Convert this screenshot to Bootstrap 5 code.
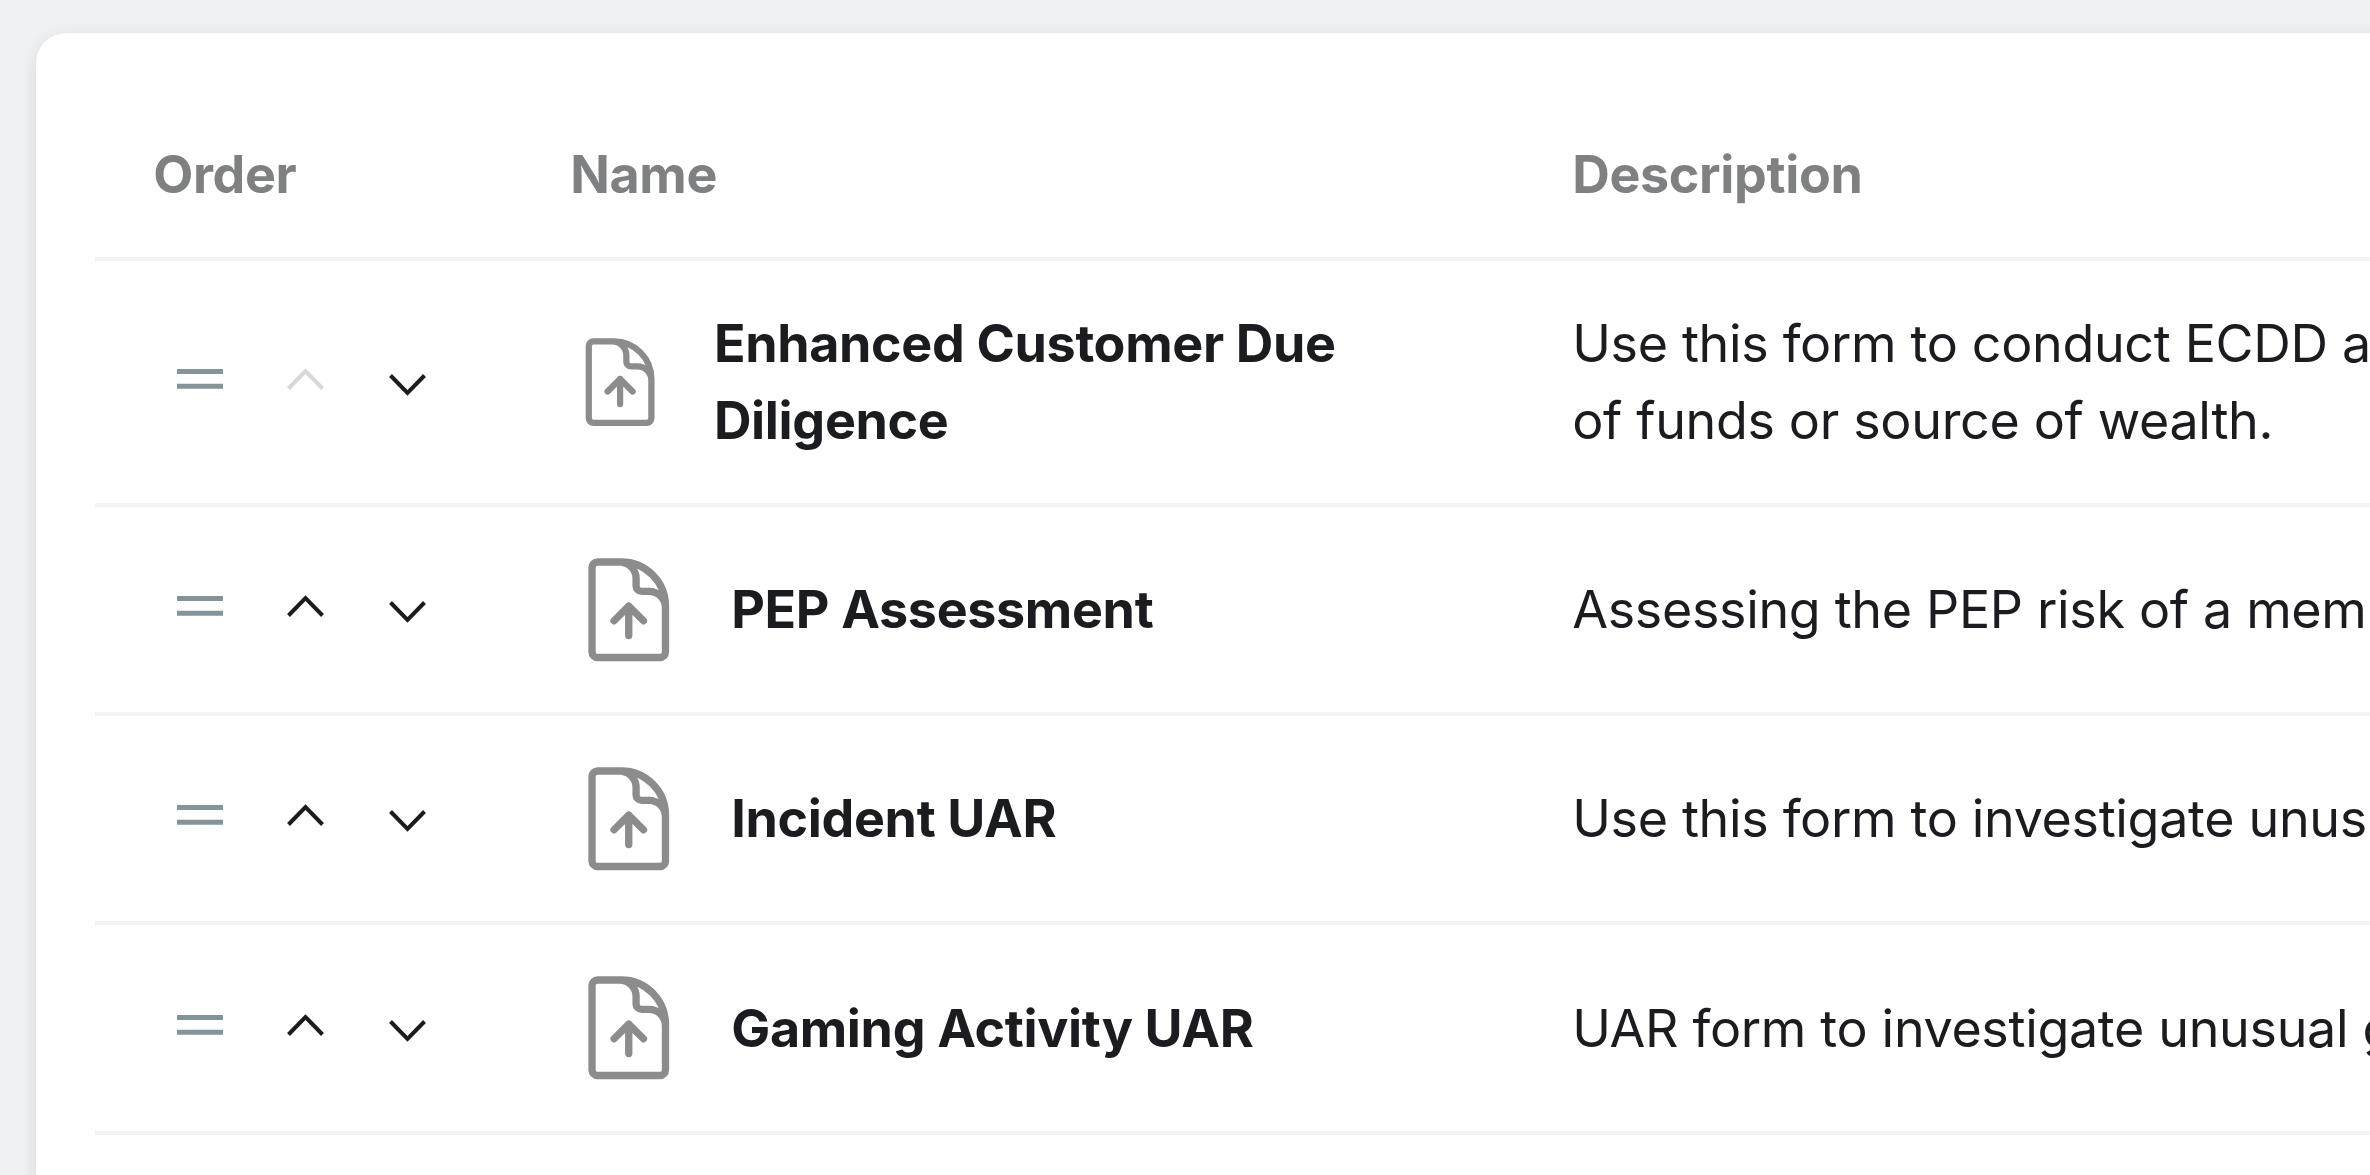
<!DOCTYPE html>
<html lang="en">
<head>
<meta charset="utf-8">
<meta name="viewport" content="width=device-width, initial-scale=1">
<title>Forms</title>
<link href="https://cdn.jsdelivr.net/npm/bootstrap@5.3.0/dist/css/bootstrap.min.css" rel="stylesheet">
<style>
  body { background: #eff0f2; font-family: Inter, "Liberation Sans", sans-serif; font-size: 52px; letter-spacing: -.0064em; line-height: 77px; color: #1b1c1f; height: 1175px; overflow: hidden; }
  .page-wrap { padding: 33px 0 0 36px; }
  .forms-card { width: 2700px; height: 1400px; border-radius: 30px; padding: 48px 58.5px; box-shadow: 0 4px 15px rgba(0,0,0,.1); }
  .forms-table { table-layout: fixed; width: 2580px; border-collapse: separate; border-spacing: 0; --bs-table-color: #1b1c1f; --bs-table-bg: transparent; }
  .forms-table > :not(caption) > * > * { padding: 43.5px 58.7px; border-bottom: 4px solid #f3f3f4; }
  .forms-table > thead > tr > th { height: 180px; padding-top: 54.5px; padding-bottom: 40px; color: #7f8081; font-weight: 700; vertical-align: top; }
  .c-order { width: 417px; }
  .c-name { width: 1002px; }
  .forms-table tbody tr { height: 209px; }
  .forms-table tbody tr:first-child { height: 246px; }
  .forms-table tbody tr:last-child { height: 210px; }
  .order-tools { margin: -7px 0 0 23.7px; }
  .order-tools svg { display: block; flex: none; }
  .doc-icon { flex: 0 0 auto; width: 117.5px; height: 117.5px; color: #8c8c8d; }
  .doc-icon.compact { width: 100.2px; height: 100.2px; }
  .name-row { gap: 43.5px; }
  .form-name { font-weight: 700; }
  .grip { margin-right: 64px; }
  .down { margin: 12px 0 0 65.5px; }
  .is-off { opacity: .17; }
</style>
</head>
<body>
<svg class="d-none" xmlns="http://www.w3.org/2000/svg">
  <symbol id="doc" viewBox="0 0 24 24"><path fill="none" stroke="currentColor" stroke-width="1.5" stroke-linecap="round" stroke-linejoin="round" d="M19.5 14.25v-2.625a3.375 3.375 0 0 0-3.375-3.375h-1.5A1.125 1.125 0 0 1 13.5 7.125v-1.5a3.375 3.375 0 0 0-3.375-3.375H8.25m6.75 12-3-3m0 0-3 3m3-3v6m-1.5-15H5.625c-.621 0-1.125.504-1.125 1.125v17.25c0 .621.504 1.125 1.125 1.125h12.75c.621 0 1.125-.504 1.125-1.125V11.25a9 9 0 0 0-9-9z"/></symbol>
  <symbol id="grip" viewBox="0 0 46 22"><path fill="none" stroke="#83949b" stroke-width="5" d="M0 3.5h46M0 18.2h46"/></symbol>
  <symbol id="up" viewBox="0 0 37 22"><path fill="none" stroke="currentColor" stroke-width="4" d="M1.5 20.5 18.5 3l17 17.5"/></symbol>
  <symbol id="down" viewBox="0 0 37 22"><path fill="none" stroke="currentColor" stroke-width="4" d="M1.5 1.5 18.5 19l17-17.5"/></symbol>
</svg>
<div class="page-wrap">
  <main class="forms-card bg-white">
    <table class="table forms-table mb-0 align-middle">
      <thead>
        <tr><th class="c-order">Order</th><th class="c-name">Name</th><th>Description</th></tr>
      </thead>
      <tbody>
        <tr>
          <td><div class="order-tools d-flex align-items-center"><svg class="grip" width="46" height="22"><use href="#grip"/></svg><svg class="is-off" width="37" height="22"><use href="#up"/></svg><svg class="down" width="37" height="22"><use href="#down"/></svg></div></td>
          <td><div class="name-row d-flex align-items-center"><svg class="doc-icon compact"><use href="#doc"/></svg><span class="form-name">Enhanced Customer Due<br>Diligence</span></div></td>
          <td class="text-nowrap">Use this form to conduct ECDD a<br>of funds or source of wealth.</td>
        </tr>
        <tr>
          <td><div class="order-tools d-flex align-items-center"><svg class="grip" width="46" height="22"><use href="#grip"/></svg><svg width="37" height="22"><use href="#up"/></svg><svg class="down" width="37" height="22"><use href="#down"/></svg></div></td>
          <td><div class="name-row d-flex align-items-center"><svg class="doc-icon"><use href="#doc"/></svg><span class="form-name">PEP Assessment</span></div></td>
          <td class="text-nowrap">Assessing the PEP risk of a mem</td>
        </tr>
        <tr>
          <td><div class="order-tools d-flex align-items-center"><svg class="grip" width="46" height="22"><use href="#grip"/></svg><svg width="37" height="22"><use href="#up"/></svg><svg class="down" width="37" height="22"><use href="#down"/></svg></div></td>
          <td><div class="name-row d-flex align-items-center"><svg class="doc-icon"><use href="#doc"/></svg><span class="form-name">Incident UAR</span></div></td>
          <td class="text-nowrap">Use this form to investigate unus</td>
        </tr>
        <tr>
          <td><div class="order-tools d-flex align-items-center"><svg class="grip" width="46" height="22"><use href="#grip"/></svg><svg width="37" height="22"><use href="#up"/></svg><svg class="down" width="37" height="22"><use href="#down"/></svg></div></td>
          <td><div class="name-row d-flex align-items-center"><svg class="doc-icon"><use href="#doc"/></svg><span class="form-name">Gaming Activity UAR</span></div></td>
          <td class="text-nowrap">UAR form to investigate unusual g</td>
        </tr>
      </tbody>
    </table>
  </main>
</div>
<script src="https://cdn.jsdelivr.net/npm/bootstrap@5.3.0/dist/js/bootstrap.bundle.min.js"></script>
</body>
</html>
